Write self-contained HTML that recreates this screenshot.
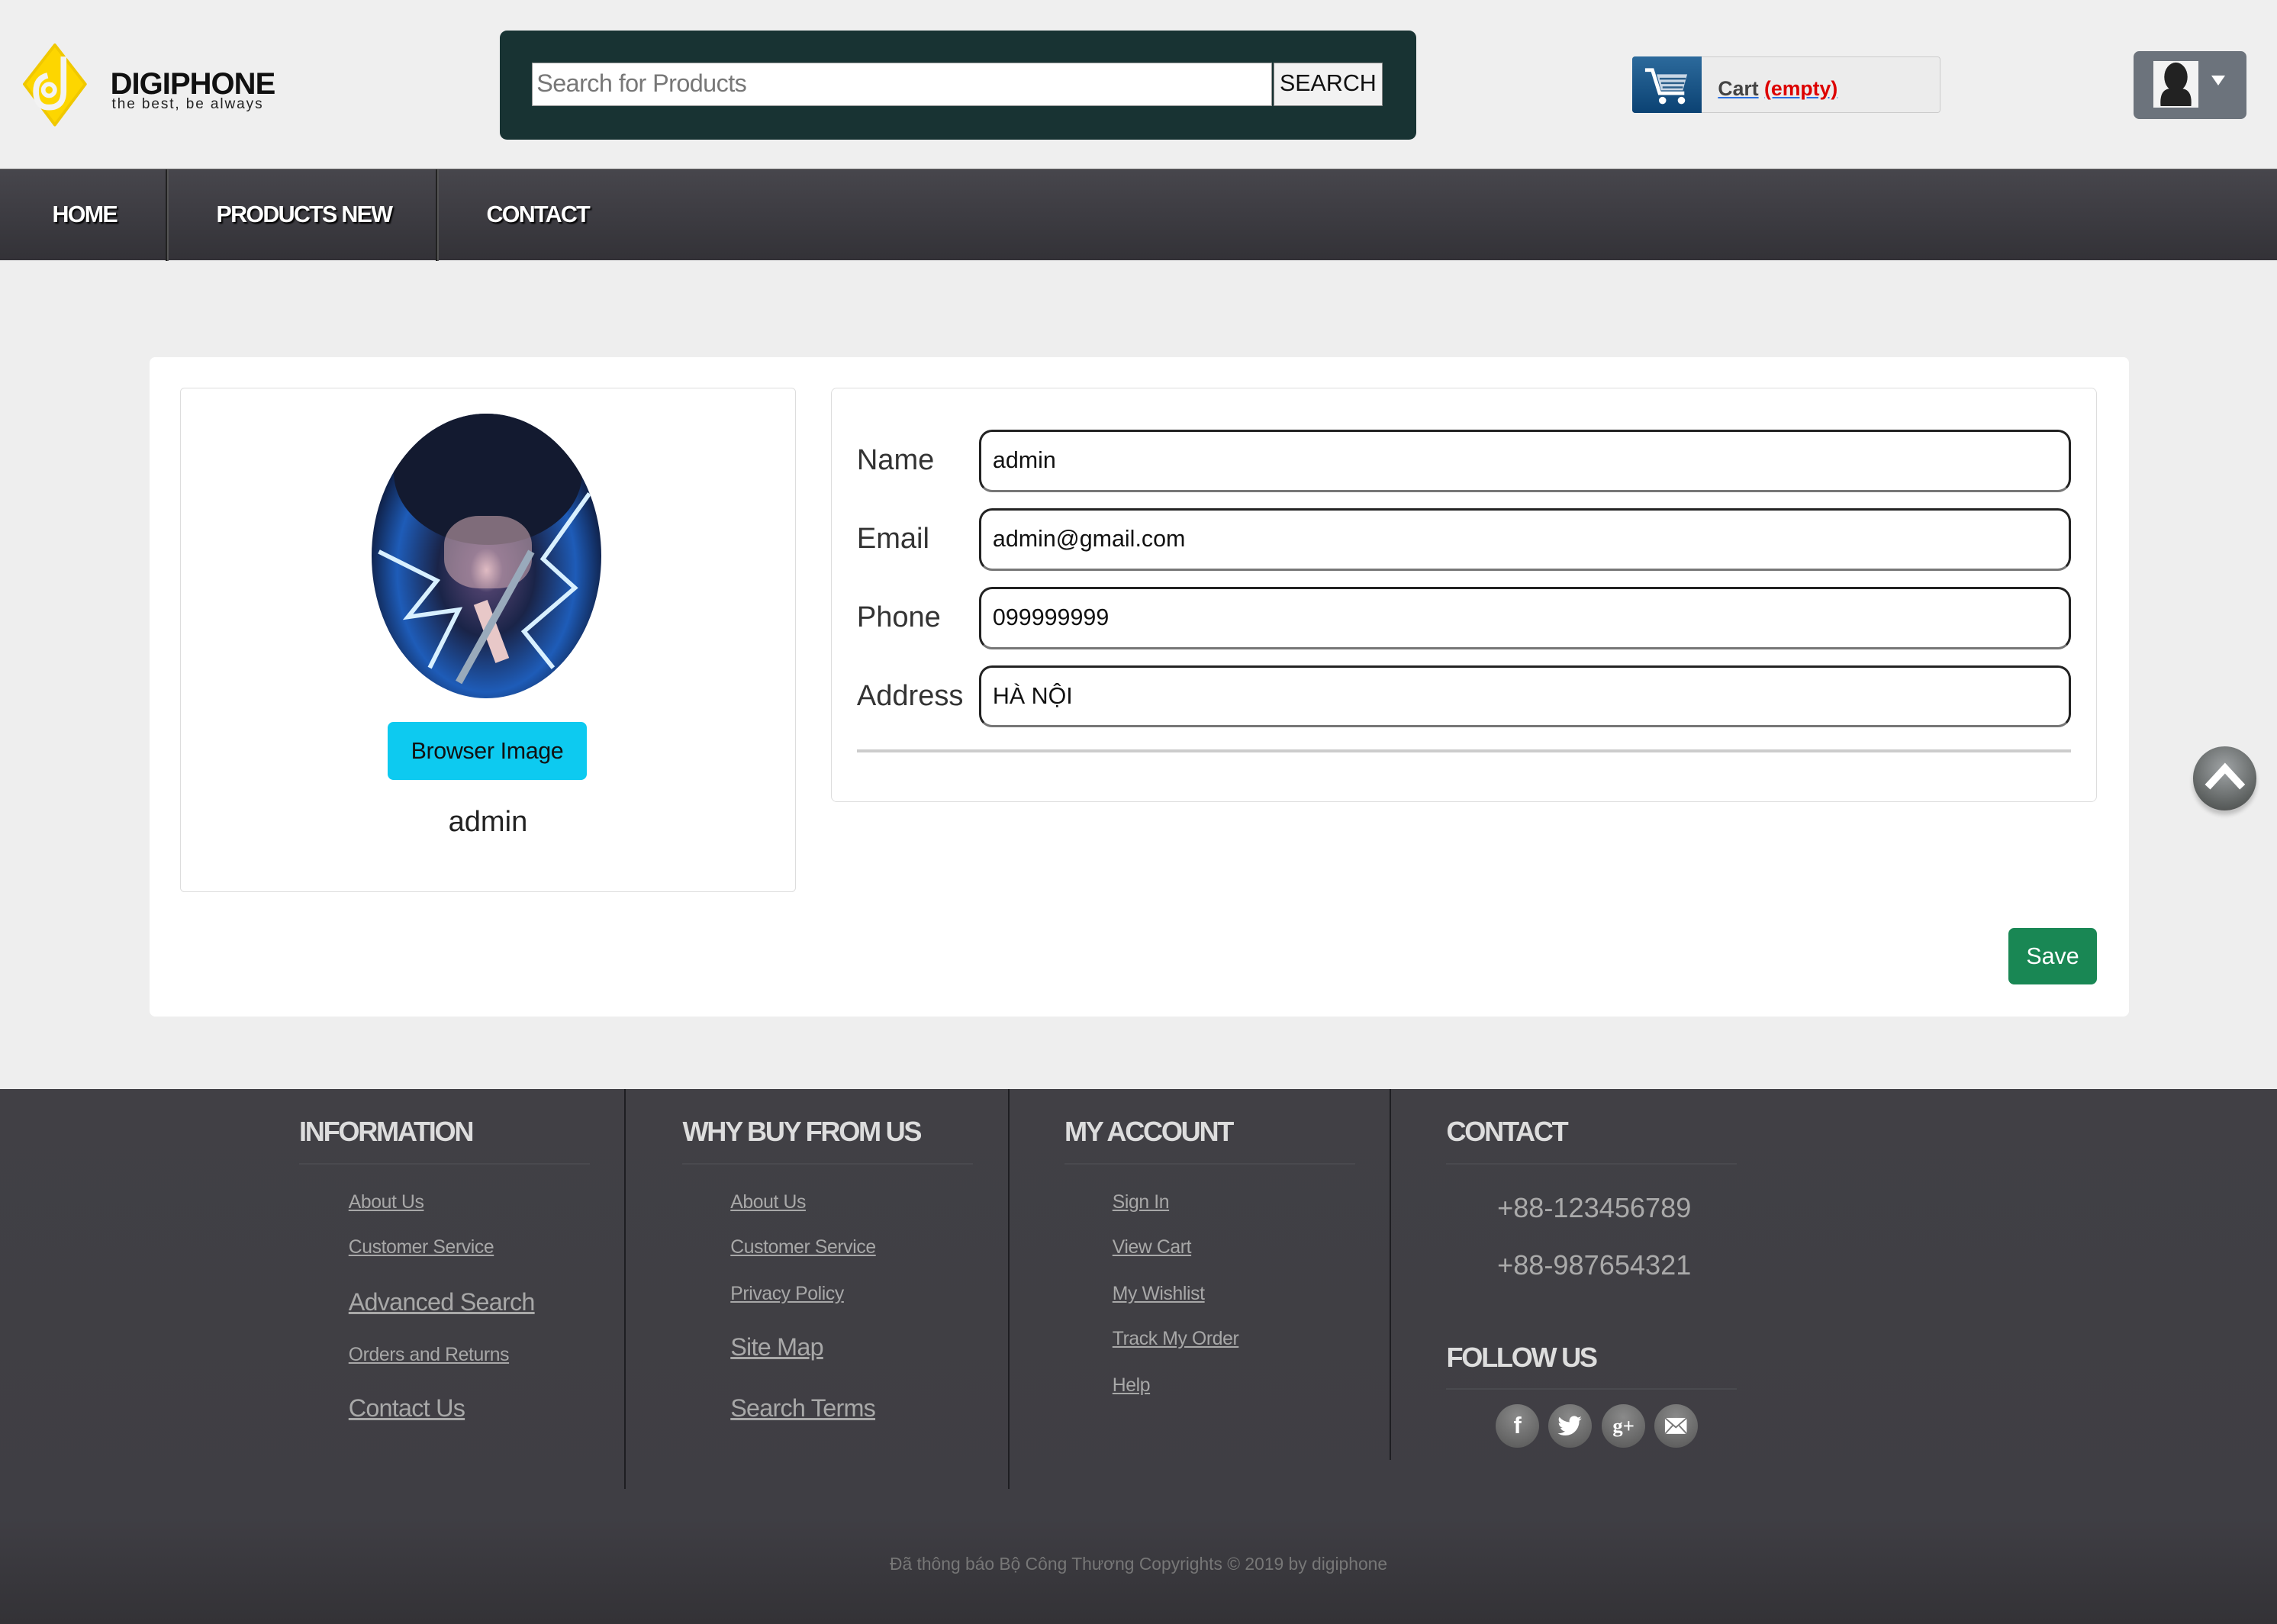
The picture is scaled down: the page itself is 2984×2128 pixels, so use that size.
<!DOCTYPE html>
<html><head><meta charset="utf-8">
<style>
*{box-sizing:border-box;margin:0;padding:0}
html,body{width:2984px;height:2128px;overflow:hidden}
body{font-family:"Liberation Sans","Noto Sans CJK SC",sans-serif;background:#eee}
#w{position:relative;width:1568px;height:1118px;zoom:1.9031;background:#eeeeee}
.a{position:absolute}
a{color:inherit}
.nav a{position:absolute;top:0;height:63px;line-height:63px;color:#fff;font-weight:bold;font-size:16px;text-decoration:none;text-shadow:1px 1px 1px #000;letter-spacing:-0.9px}
.sep{position:absolute;top:0;width:1px;height:63px;background:#222;box-shadow:1px 0 0 #555}
.lbl{position:absolute;left:590px;font-size:20px;color:#333}
.inp{position:absolute;left:674px;width:752px;height:43px;border:2px solid #222;border-bottom-color:#777;border-radius:9px;padding-left:8px;line-height:39px;font-size:16px;color:#111}
.fh{position:absolute;top:768px;font-size:19px;font-weight:bold;color:#ddd;letter-spacing:-1.2px}
.fl{position:absolute;height:1px;top:801px;background:#4a4a4f;width:200px}
.lk{position:absolute;color:#a8a8a8;text-decoration:underline;font-size:13px;letter-spacing:-0.2px}
.lk.b{font-size:17px;letter-spacing:-0.4px}
.vs{position:absolute;top:750px;width:1px;height:275px;background:#1e1e22}
.soc{position:absolute;top:967px;width:30px;height:30px;border-radius:50%;background:radial-gradient(circle at 50% 30%,#8a8a8a,#555);color:#fff;text-align:center;line-height:30px;font-weight:bold;font-size:16px}
</style></head><body><div id="w">
<div class="a" style="left:0;top:0;width:1568px;height:116px;background:#efefef"></div>
<svg class="a" style="left:16px;top:30px" width="44" height="57" viewBox="0 0 44 57">
<path d="M22 1 L43 28 L22 56 L1 28 Z" fill="#fdd600" stroke="#f0c800" stroke-linejoin="round" stroke-width="2"/>
<path d="M28 9 L28 33 Q28 44 18 44 Q9 44 9 33 Q9 24 17 22" fill="none" stroke="#f3f3f3" stroke-width="4"/>
<circle cx="18" cy="32" r="4" fill="none" stroke="#f3f3f3" stroke-width="3"/>
</svg>
<div class="a" style="left:76px;top:46px;font-size:21px;font-weight:bold;color:#111;letter-spacing:-0.5px;line-height:24px">DIGIPHONE</div>
<div class="a" style="left:77px;top:66px;font-size:10px;color:#222;letter-spacing:1px">the best, be always</div>
<div class="a" style="left:344px;top:21px;width:631px;height:75px;background:#183333;border-radius:5px"></div>
<div class="a" style="left:366px;top:43px;width:510px;height:30px;background:#fff;border:1px solid #999;font-size:17px;color:#777;line-height:28px;padding-left:3px;letter-spacing:-0.3px">Search for Products</div>
<div class="a" style="left:877px;top:43px;width:75px;height:30px;background:#f2f2f2;border:1px solid #888;font-size:16px;color:#111;line-height:28px;text-align:center">SEARCH</div>
<div class="a" style="left:1124px;top:39px;width:212px;height:39px;background:#ececec;border:1px solid #ccc;border-radius:2px"></div>
<div class="a" style="left:1124px;top:39px;width:48px;height:39px;background:linear-gradient(#2c6a9c,#0b4273);border-radius:2px 0 0 2px"></div>
<svg class="a" style="left:1132px;top:45px" width="34" height="28" viewBox="0 0 34 28"><path d="M1 3h5l5 16h17" fill="none" stroke="#fff" stroke-width="2.5"/><path d="M9 6h21l-3 11H12z" fill="#c9d7e6"/><path d="M11 9h18M12 12h16M13 15h14" stroke="#2c5f8a" stroke-width="1.3"/><circle cx="13" cy="24" r="2.5" fill="#fff"/><circle cx="26" cy="24" r="2.5" fill="#fff"/></svg>
<div class="a" style="left:1183px;top:53px;font-size:14px;font-weight:bold"><span style="color:#444;text-decoration:underline;text-decoration-color:#2a6fe0">Cart</span> <span style="color:#d00;text-decoration:underline;text-decoration-color:#2a6fe0">(empty)</span></div>
<div class="a" style="left:1469px;top:35px;width:78px;height:47px;background:#6c737c;border-radius:4px"></div>
<div class="a" style="left:1483px;top:42px;width:31px;height:32px;background:#f3f3f3"></div>
<svg class="a" style="left:1483px;top:42px" width="31" height="32" viewBox="0 0 31 32"><ellipse cx="15.5" cy="11" rx="8" ry="10" fill="#222"/><path d="M5 31 Q4 20 11 19 Q15.5 22 20 19 Q27 20 26 31Z" fill="#222"/></svg>
<div class="a" style="left:1523px;top:52px;width:0;height:0;border-left:5px solid transparent;border-right:5px solid transparent;border-top:7px solid #fff"></div>
<div class="a nav" style="left:0;top:116px;width:1568px;height:63px;background:linear-gradient(#47464c,#3d3c42 50%,#333237);border-top:1px solid #666">
<a style="left:36px">HOME</a><div class="sep" style="left:114px"></div>
<a style="left:149px">PRODUCTS NEW</a><div class="sep" style="left:300px"></div>
<a style="left:335px">CONTACT</a>
</div>
<div class="a" style="left:103px;top:246px;width:1363px;height:454px;background:#fff;border-radius:4px"></div>
<div class="a" style="left:124px;top:267px;width:424px;height:347px;border:1px solid #ddd;border-radius:3px"></div>
<div class="a" style="left:256px;top:285px;width:158px;height:196px;border-radius:50%;background:radial-gradient(ellipse at 50% 55%,#e8c8d0 0,#4a3f6a 10%,#1a2448 30%,#1e5cb8 55%,#0d1838 75%,#2a5ac8 90%,#101a3a 100%);overflow:hidden">
<div class="a" style="left:15px;top:-10px;width:130px;height:100px;border-radius:50%;background:#131a30"></div>
<div class="a" style="left:50px;top:70px;width:60px;height:50px;border-radius:40%;background:#d8b0b8;opacity:.55"></div>
<svg class="a" style="left:0;top:0" width="158" height="196"><path d="M5 95 L45 115 L25 140 L60 135 L40 175" stroke="#d8f0ff" stroke-width="3" fill="none"/><path d="M150 55 L118 100 L140 120 L105 150 L125 175" stroke="#d8f0ff" stroke-width="3" fill="none"/><path d="M75 130 L90 170" stroke="#e8c8c8" stroke-width="10"/><path d="M110 95 L60 185" stroke="#9ab" stroke-width="5"/></svg>
</div>
<div class="a" style="left:267px;top:497px;width:137px;height:40px;background:#0dcaf0;border-radius:4px;font-size:16px;line-height:40px;text-align:center;color:#111;letter-spacing:-0.2px">Browser Image</div>
<div class="a" style="left:124px;top:555px;width:424px;text-align:center;font-size:20px;color:#222">admin</div>
<div class="a" style="left:572px;top:267px;width:872px;height:285px;border:1px solid #ddd;border-radius:4px"></div>
<div class="lbl" style="top:306px">Name</div><div class="inp" style="top:296px">admin</div>
<div class="lbl" style="top:360px">Email</div><div class="inp" style="top:350px">admin@gmail.com</div>
<div class="lbl" style="top:414px">Phone</div><div class="inp" style="top:404px">099999999</div>
<div class="lbl" style="top:468px">Address</div><div class="inp" style="top:458px">HÀ NỘI</div>
<div class="a" style="left:590px;top:516px;width:836px;height:2px;background:#ccc"></div>
<div class="a" style="left:1383px;top:639px;width:61px;height:39px;background:#198754;border-radius:4px;color:#fff;font-size:16px;line-height:39px;text-align:center">Save</div>
<div class="a" style="left:1510px;top:514px;width:44px;height:44px;border-radius:50%;background:radial-gradient(circle at 50% 35%,#a0a4a6,#5c605f 70%,#444);box-shadow:0 3px 3px rgba(0,0,0,.2)"></div>
<svg class="a" style="left:1510px;top:514px" width="44" height="44"><path d="M10 28 L22 15 L34 28" fill="none" stroke="#fff" stroke-width="5"/></svg>
<div class="a" style="left:0;top:750px;width:1568px;height:368px;background:linear-gradient(#414045,#3f3e44 80%,#333236)"></div>
<div class="vs" style="left:430px"></div><div class="vs" style="left:694px"></div><div class="vs" style="left:957px;height:255px"></div>
<div class="fh" style="left:206px">INFORMATION</div><div class="fl" style="left:206px"></div>
<div class="fh" style="left:470px">WHY BUY FROM US</div><div class="fl" style="left:470px"></div>
<div class="fh" style="left:733px">MY ACCOUNT</div><div class="fl" style="left:733px"></div>
<div class="fh" style="left:996px">CONTACT</div><div class="fl" style="left:996px"></div>
<a class="lk" style="left:240px;top:821px">About Us</a>
<a class="lk" style="left:240px;top:852px">Customer Service</a>
<a class="lk b" style="left:240px;top:887px">Advanced Search</a>
<a class="lk" style="left:240px;top:926px">Orders and Returns</a>
<a class="lk b" style="left:240px;top:960px">Contact Us</a>
<a class="lk" style="left:503px;top:821px">About Us</a>
<a class="lk" style="left:503px;top:852px">Customer Service</a>
<a class="lk" style="left:503px;top:884px">Privacy Policy</a>
<a class="lk b" style="left:503px;top:918px">Site Map</a>
<a class="lk b" style="left:503px;top:960px">Search Terms</a>
<a class="lk" style="left:766px;top:821px">Sign In</a>
<a class="lk" style="left:766px;top:852px">View Cart</a>
<a class="lk" style="left:766px;top:884px">My Wishlist</a>
<a class="lk" style="left:766px;top:915px">Track My Order</a>
<a class="lk" style="left:766px;top:947px">Help</a>
<div class="a" style="left:1031px;top:821px;font-size:19px;color:#aaa">+88-123456789</div>
<div class="a" style="left:1031px;top:860px;font-size:19px;color:#aaa">+88-987654321</div>
<div class="fh" style="left:996px;top:924px">FOLLOW US</div><div class="fl" style="left:996px;top:956px"></div>
<div class="soc" style="left:1030px">f</div>
<div class="soc" style="left:1066px"></div>
<svg class="a" style="left:1072px;top:974px" width="18" height="16" viewBox="0 0 24 20"><path d="M23 2.5c-.8.4-1.7.6-2.6.7.9-.6 1.6-1.4 2-2.5-.9.5-1.9.9-2.9 1.1A4.5 4.5 0 0 0 11.8 6 12.8 12.8 0 0 1 2.5 1.3a4.5 4.5 0 0 0 1.4 6c-.7 0-1.4-.2-2-.6 0 2.2 1.6 4 3.6 4.4-.7.2-1.4.2-2 .1.6 1.8 2.2 3.1 4.2 3.1A9 9 0 0 1 1 16.2 12.8 12.8 0 0 0 7.9 18.2c8.3 0 12.8-6.9 12.8-12.8v-.6c.9-.6 1.6-1.4 2.3-2.3z" fill="#fff"/></svg>
<div class="soc" style="left:1103px;font-size:14px;font-family:'Liberation Serif',serif">g+</div>
<div class="soc" style="left:1139px"></div>
<svg class="a" style="left:1146px;top:976px" width="16" height="12" viewBox="0 0 16 12"><rect x="0.5" y="0.5" width="15" height="11" fill="#fff"/><path d="M0.5 0.5 L8 7 L15.5 0.5 M0.5 11.5 L6 5.5 M15.5 11.5 L10 5.5" stroke="#777" stroke-width="1" fill="none"/></svg>
<div class="a" style="left:0;top:1070px;width:1568px;text-align:center;font-size:12px;color:#777">Đã thông báo Bộ Công Thương Copyrights © 2019 by digiphone</div>
</div></body></html>
